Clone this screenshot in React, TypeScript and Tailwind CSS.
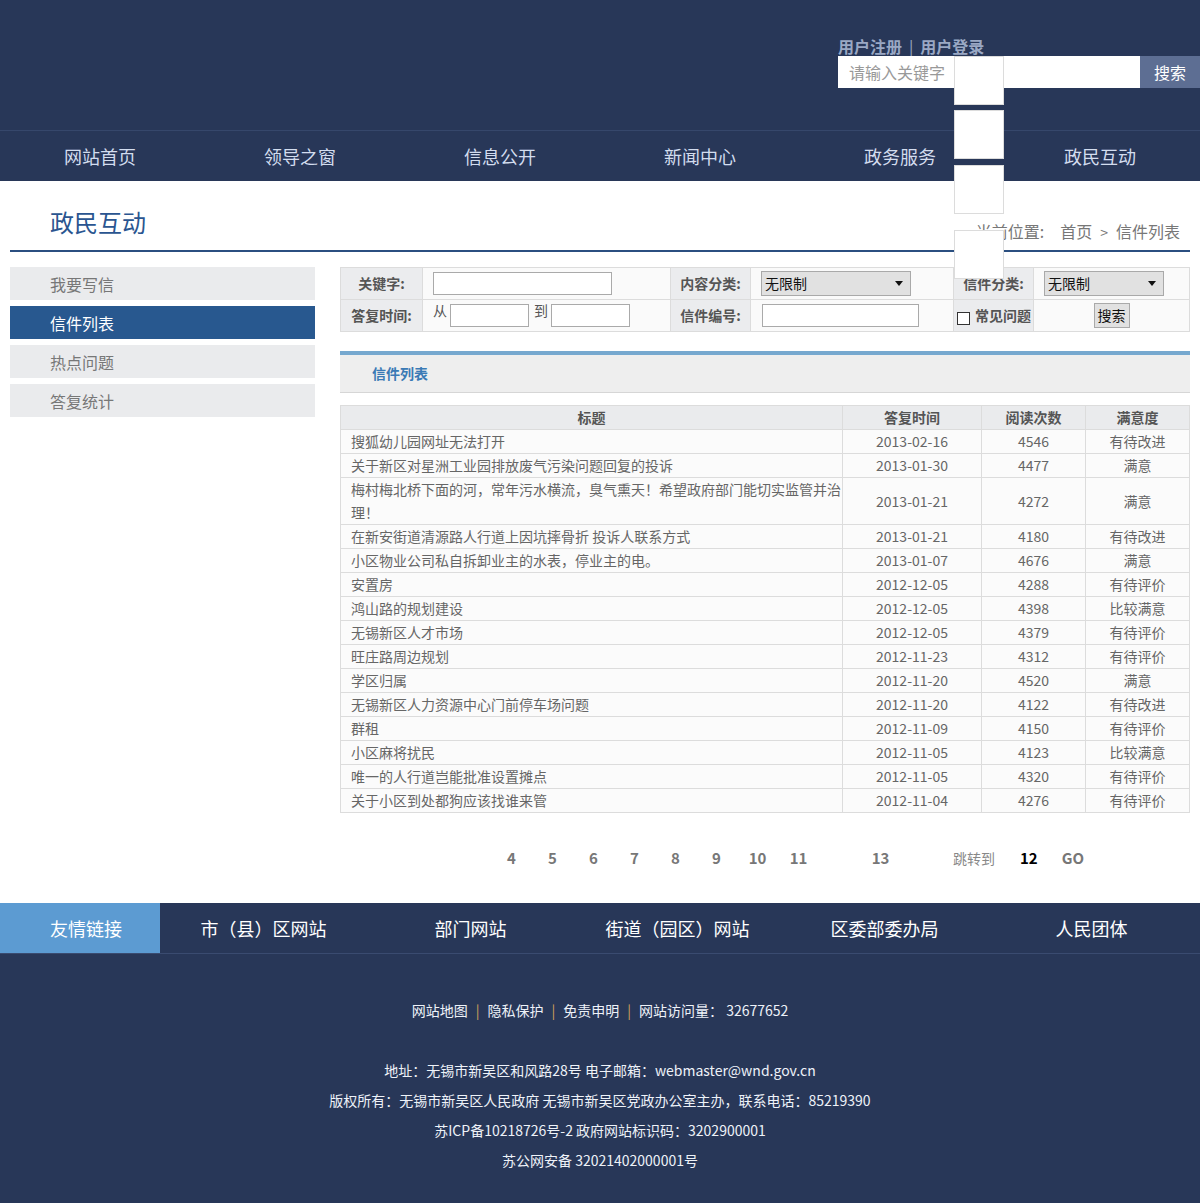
import React from "react";

const font = { fontFamily: '"Microsoft YaHei", "Noto Sans CJK SC", "Liberation Sans", sans-serif' };

const navItems = ["网站首页", "领导之窗", "信息公开", "新闻中心", "政务服务", "政民互动"];
const sideItems = ["我要写信", "信件列表", "热点问题", "答复统计"];

const letters: [string, string, string, string][] = [
  ["搜狐幼儿园网址无法打开", "2013-02-16", "4546", "有待改进"],
  ["关于新区对星洲工业园排放废气污染问题回复的投诉", "2013-01-30", "4477", "满意"],
  ["梅村梅北桥下面的河，常年污水横流，臭气熏天！希望政府部门能切实监管并治理！", "2013-01-21", "4272", "满意"],
  ["在新安街道清源路人行道上因坑摔骨折 投诉人联系方式", "2013-01-21", "4180", "有待改进"],
  ["小区物业公司私自拆卸业主的水表，停业主的电。", "2013-01-07", "4676", "满意"],
  ["安置房", "2012-12-05", "4288", "有待评价"],
  ["鸿山路的规划建设", "2012-12-05", "4398", "比较满意"],
  ["无锡新区人才市场", "2012-12-05", "4379", "有待评价"],
  ["旺庄路周边规划", "2012-11-23", "4312", "有待评价"],
  ["学区归属", "2012-11-20", "4520", "满意"],
  ["无锡新区人力资源中心门前停车场问题", "2012-11-20", "4122", "有待改进"],
  ["群租", "2012-11-09", "4150", "有待评价"],
  ["小区麻将扰民", "2012-11-05", "4123", "比较满意"],
  ["唯一的人行道岂能批准设置摊点", "2012-11-05", "4320", "有待评价"],
  ["关于小区到处都狗应该找谁来管", "2012-11-04", "4276", "有待评价"],
];

const footerNav = ["市（县）区网站", "部门网站", "街道（园区）网站", "区委部委办局", "人民团体"];

const labelCell = "bg-[#ebecee] border border-[#dcdcdc] text-[14px] font-bold text-[#555] text-center h-[32px] px-0";
const valueCell = "bg-[#fafafa] border border-[#dcdcdc] text-[14px] text-[#555] h-[32px] px-[10px]";
const inputCls = "h-[23px] border border-[#aaa] bg-white";

function Select({ w }: { w: string }) {
  return (
    <div className={`${w} h-[25px] bg-[#e1e1e1] border border-[#a9a9a9] flex items-center justify-between pl-[3px] pr-[7px] text-[14px] text-[#111]`}>
      <span>无限制</span>
      <svg width="8" height="5" viewBox="0 0 8 5"><path d="M0 0h8L4 5z" fill="#111" /></svg>
    </div>
  );
}

export default function App() {
  return (
    <div className="relative w-[1200px] bg-white" style={font}>
      {/* header */}
      <div className="bg-[#283758]">
        <div className="h-[130px] flex justify-end">
          <div className="w-[362px] pt-[35px]">
            <div className="text-[16px] leading-[22px] font-bold text-[#9aa8c4]">
              用户注册<span className="font-normal mx-[7px]">|</span>用户登录
            </div>
            <div className="flex h-[32px] mt-[-1px]">
              <div className="flex-1 bg-white text-[16px] text-[#999] pl-[11px] flex items-center">请输入关键字</div>
              <div className="w-[60px] bg-[#5d6e93] text-white text-[16px] flex items-center justify-center">搜索</div>
            </div>
          </div>
        </div>
        <div className="grid grid-cols-6 h-[51px] border-t border-[#36476b]">
          {navItems.map((n) => (
            <div key={n} className="flex items-center justify-center text-[18px] text-[#d3ddef]">{n}</div>
          ))}
        </div>
      </div>

      {/* title row */}
      <div className="px-[10px]">
        <div className="h-[71px] flex items-end justify-between border-b-2 border-[#2b4f80] pl-[40px] pr-[10px]">
          <div className="text-[24px] leading-[32px] text-[#2a5590] pb-[12px]">政民互动</div>
          <div className="text-[16px] leading-[24px] text-[#777] pb-[6px]">
            当前位置:<span className="ml-[16px]">首页</span>
            <span className="text-[14px] mx-[8px]">&gt;</span>信件列表
          </div>
        </div>
      </div>

      {/* content */}
      <div className="flex px-[10px] mt-[15px] gap-[25px]">
        <div className="w-[305px] flex flex-col gap-[6px]">
          {sideItems.map((s) => (
            <div
              key={s}
              className={`h-[33px] flex items-center pl-[40px] text-[16px] ${s === "信件列表" ? "bg-[#28588f] text-white" : "bg-[#eaebed] text-[#777]"}`}
            >
              {s}
            </div>
          ))}
        </div>

        <div className="w-[850px]">
          <table className="w-full border-collapse">
            <tbody>
              <tr>
                <td className={`${labelCell} w-[82px]`}>关键字:</td>
                <td className={`${valueCell} w-[248px]`}>
                  <div className={`${inputCls} w-[179px]`} />
                </td>
                <td className={`${labelCell} w-[80px]`}>内容分类:</td>
                <td className={`${valueCell} w-[203px]`}>
                  <Select w="w-[150px]" />
                </td>
                <td className={`${labelCell} w-[80px]`}>信件分类:</td>
                <td className={`${valueCell}`}>
                  <Select w="w-[120px]" />
                </td>
              </tr>
              <tr>
                <td className={labelCell}>答复时间:</td>
                <td className={valueCell}>
                  <div className="flex items-center">
                    <span className="self-start mt-[-4px]">从</span>
                    <div className={`${inputCls} w-[79px] ml-[3px]`} />
                    <span className="self-start mt-[-4px] ml-[5px]">到</span>
                    <div className={`${inputCls} w-[79px] ml-[3px]`} />
                  </div>
                </td>
                <td className={labelCell}>信件编号:</td>
                <td className={valueCell}>
                  <div className={`${inputCls} w-[157px] ml-[1px]`} />
                </td>
                <td className={`${labelCell} text-left pl-[3px]`}>
                  <div className="flex items-center gap-[5px]">
                    <div className="w-[13px] h-[13px] border border-[#333] bg-white mt-[5px]" />
                    <span>常见问题</span>
                  </div>
                </td>
                <td className={`${valueCell} text-center`}>
                  <span className="inline-block px-[3px] h-[25px] leading-[23px] bg-[#e1e1e1] border border-[#a9a9a9] text-[14px] text-[#111]">搜索</span>
                </td>
              </tr>
            </tbody>
          </table>

          <div className="mt-[19px] h-[42px] border-t-4 border-[#76a8cf] border-b border-b-[#d6d6d6] bg-[#eeeeee] flex items-center pl-[32px] text-[14px] font-bold text-[#3a7ab5]">
            信件列表
          </div>

          <table className="w-full border-collapse mt-[12px] text-[14px] text-[#666]">
            <thead>
              <tr className="h-[24px] bg-[#eaebed] text-[#555]">
                <th className="border border-[#dcdcdc] font-bold w-[502px]">标题</th>
                <th className="border border-[#dcdcdc] font-bold w-[139px]">答复时间</th>
                <th className="border border-[#dcdcdc] font-bold w-[104px]">阅读次数</th>
                <th className="border border-[#dcdcdc] font-bold">满意度</th>
              </tr>
            </thead>
            <tbody>
              {letters.map((r) => (
                <tr key={r[0]} className="bg-[#fbfbfb]">
                  <td className="border border-[#dcdcdc] pl-[10px] leading-[23px] text-left">{r[0]}</td>
                  <td className="border border-[#dcdcdc] text-center leading-[23px]">{r[1]}</td>
                  <td className="border border-[#dcdcdc] text-center leading-[23px]">{r[2]}</td>
                  <td className="border border-[#dcdcdc] text-center leading-[23px]">{r[3]}</td>
                </tr>
              ))}
            </tbody>
          </table>

          <div className="h-[90px] flex items-center text-[15px] font-bold text-[#777] pl-[151px]">
            {["4", "5", "6", "7", "8", "9", "10", "11"].map((p) => (
              <span key={p} className="w-[41px] text-center">{p}</span>
            ))}
            <span className="w-[41px]" />
            <span className="w-[41px] text-center">13</span>
            <span className="ml-[52px] text-[14px] font-normal text-[#888]">跳转到</span>
            <span className="ml-[25px] text-black">12</span>
            <span className="ml-[24px]">GO</span>
          </div>
        </div>
      </div>

      {/* footer */}
      <div className="bg-[#283758]">
        <div className="flex h-[51px] border-b border-[#3a4b70]">
          <div className="w-[160px] bg-[#5c9bd2] text-white text-[18px] flex items-center pl-[50px]">友情链接</div>
          <div className="w-[1035px] grid grid-cols-5">
            {footerNav.map((f) => (
              <div key={f} className="flex items-center justify-center text-[18px] text-white">{f}</div>
            ))}
          </div>
        </div>
        <div className="text-center text-[14px] text-[#eef2f8] leading-[30px] pt-[41px] pb-[28px]">
          <div>
            网站地图<span className="text-[#d4a35a] mx-[8px]">|</span>隐私保护<span className="text-[#d4a35a] mx-[8px]">|</span>免责申明<span className="text-[#d4a35a] mx-[8px]">|</span>网站访问量： 32677652
          </div>
          <div className="mt-[30px]">地址：无锡市新吴区和风路28号 电子邮箱：webmaster@wnd.gov.cn</div>
          <div>版权所有：无锡市新吴区人民政府 无锡市新吴区党政办公室主办，联系电话：85219390</div>
          <div>苏ICP备10218726号-2 政府网站标识码：3202900001</div>
          <div>苏公网安备 32021402000001号</div>
        </div>
      </div>

      {/* stray dropdown boxes over the page */}
      <div className="absolute left-[954px] top-[56px] w-[50px] h-[49px] bg-white border border-[#dcdcdc]" />
      <div className="absolute left-[954px] top-[110px] w-[50px] h-[49px] bg-white border border-[#dcdcdc]" />
      <div className="absolute left-[954px] top-[165px] w-[50px] h-[49px] bg-white border border-[#dcdcdc]" />
      <div className="absolute left-[954px] top-[230px] w-[50px] h-[49px] bg-white border border-[#dcdcdc]" />
    </div>
  );
}
